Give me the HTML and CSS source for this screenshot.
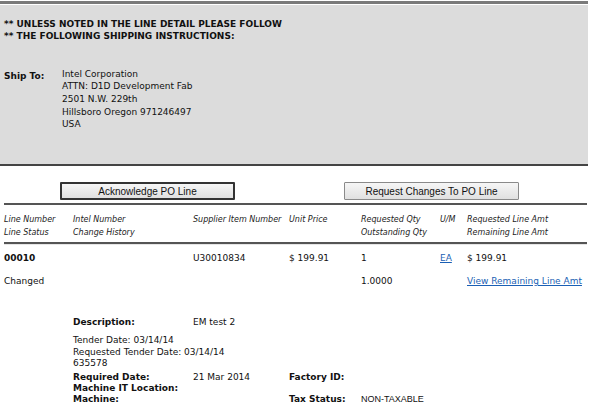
FILE: index.html
```html
<!DOCTYPE html>
<html lang="en">

<head>
    <meta charset="UTF-8">
    <title>PO Line Detail</title>
    <link rel="stylesheet" href="styles.css">
</head>

<body>
    <div class="ship-box">
        <p class="notice">** UNLESS NOTED IN THE LINE DETAIL PLEASE FOLLOW<br>** THE FOLLOWING SHIPPING INSTRUCTIONS:</p>
        <div class="ship-to">
            <span class="ship-label">Ship To:</span>
            <div class="address">
                <div>Intel Corporation</div>
                <div>ATTN: D1D Development Fab</div>
                <div class="gap">2501 N.W. 229th</div>
                <div class="gap">Hillsboro Oregon 971246497</div>
                <div>USA</div>
            </div>
        </div>
    </div>

    <div class="actions">
        <button class="btn btn-ack">Acknowledge PO Line</button>
        <button class="btn btn-req">Request Changes To PO Line</button>
    </div>

    <div class="line-table">
        <div class="row head">
            <span>Line Number<br>Line Status</span>
            <span>Intel Number<br>Change History</span>
            <span>Supplier Item Number</span>
            <span>Unit Price</span>
            <span>Requested Qty<br>Outstanding Qty</span>
            <span>U/M</span>
            <span>Requested Line Amt<br>Remaining Line Amt</span>
        </div>
        <div class="row data">
            <span class="bold">00010</span>
            <span></span>
            <span>U30010834</span>
            <span>$ 199.91</span>
            <span>1</span>
            <span><a href="#">EA</a></span>
            <span>$ 199.91</span>
        </div>
        <div class="row data second">
            <span>Changed</span>
            <span></span>
            <span></span>
            <span></span>
            <span>1.0000</span>
            <span></span>
            <span><a href="#">View Remaining Line Amt</a></span>
        </div>
    </div>

    <div class="details">
        <div class="desc">
            <span class="bold">Description:</span>
            <span>EM test 2</span>
        </div>
        <div class="tender">
            Tender Date: 03/14/14<br>
            Requested Tender Date: 03/14/14<br>
            635578
        </div>
        <div class="facts">
            <span class="bold">Required Date:</span>
            <span>21 Mar 2014</span>
            <span class="bold">Factory ID:</span>
            <span></span>
            <span class="bold">Machine IT Location:</span>
            <span></span>
            <span></span>
            <span></span>
            <span class="bold">Machine:</span>
            <span></span>
            <span class="bold">Tax Status:</span>
            <span class="plain">NON-TAXABLE</span>
        </div>
    </div>
</body>

</html>
```

FILE: styles.css
```css
body {
    margin: 1px 0 0 0;
    font-family: "DejaVu Sans", Verdana, sans-serif;
    font-size: 9px;
    color: #111;
    background: #fff;
}

.bold {
    font-weight: bold;
}

/* grey shipping block */
.ship-box {
    width: 588px;
    height: 165px;
    box-sizing: border-box;
    background-color: #dcdcdc;
    border-top: 3px solid #7a7a7a;
    border-bottom: 2px solid #444;
    box-shadow: inset 0 1px 0 #fff;
    padding: 14px 4px 0 4px;
}

.notice {
    margin: 0;
    font-weight: bold;
    line-height: 12px;
}

.ship-to {
    display: flex;
    margin-top: 26px;
    line-height: 12px;
}

.ship-label {
    width: 58px;
    font-weight: bold;
    padding-top: 2px;
}

.address .gap {
    margin-top: 1px;
}

/* buttons */
.actions {
    display: flex;
    padding: 16px 0 0 60px;
    gap: 109px;
}

.btn {
    width: 175px;
    height: 18px;
    font-family: "Liberation Sans", Arial, sans-serif;
    font-size: 10px;
    color: #111;
    background: linear-gradient(#f6f6f6, #e0e0e0);
    border: 1px solid #8a8a8a;
    border-radius: 1px;
    padding: 0;
}

.btn-ack {
    border: 2px solid #333;
}

/* line table */
.line-table {
    margin: 3px 3px 0 4px;
}

.row {
    display: grid;
    grid-template-columns: 69px 120px 96px 72px 79px 27px 1fr;
}

.head {
    border-top: 2px solid #555;
    border-bottom: 2px solid #555;
    padding: 8px 0 3px 0;
    font-style: italic;
    font-size: 8px;
    line-height: 13px;
    color: #222;
}

.data {
    border-top: 1px solid #e6e6e6;
    padding-top: 7px;
    line-height: 12px;
}

.second {
    border-top: none;
    padding-top: 11px;
}

a {
    color: #1a5fb4;
}

/* line details */
.details {
    padding: 29px 0 0 73px;
    line-height: 12px;
}

.desc {
    display: grid;
    grid-template-columns: 120px 1fr;
}

.tender {
    margin-top: 7px;
    line-height: 11.5px;
}

.facts {
    display: grid;
    grid-template-columns: 120px 96px 72px 1fr;
    margin-top: 2px;
    line-height: 11px;
}

.plain {
    font-family: "Liberation Sans", Arial, sans-serif;
}
```
